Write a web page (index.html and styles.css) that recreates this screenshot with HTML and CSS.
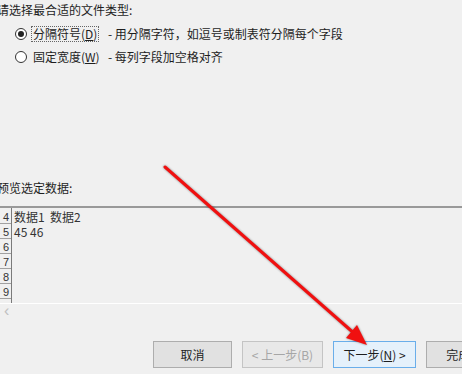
FILE: index.html
```html
<!DOCTYPE html>
<html>
<head>
    <meta charset="utf-8" />
    <title>文本导入向导</title>
    <link rel="stylesheet" href="styles.css">
</head>
<body>
    <div class="wizard">
        <p class="caption title">请选择最合适的文件类型:</p>
        <div class="options">
            <label class="opt">
                <span class="radio checked"></span>
                <span class="opt-name focus">分隔符号(<u>D</u>)</span>
                <span class="opt-desc">- 用分隔字符，如逗号或制表符分隔每个字段</span>
            </label>
            <label class="opt">
                <span class="radio"></span>
                <span class="opt-name">固定宽度(<u>W</u>)</span>
                <span class="opt-desc">- 每列字段加空格对齐</span>
            </label>
        </div>

        <p class="caption preview-title">预览选定数据:</p>
        <div class="preview">
            <div class="grid">
                <div class="nums">
                    <div class="num">4</div>
                    <div class="num">5</div>
                    <div class="num">6</div>
                    <div class="num">7</div>
                    <div class="num">8</div>
                    <div class="num">9</div>
                </div>
                <div class="data">
                    <div class="line">数据1  数据2</div>
                    <div class="line">45 46</div>
                </div>
            </div>
            <div class="hscroll">&lsaquo;</div>
        </div>

        <div class="buttons">
            <button class="btn cancel">取消</button>
            <button class="btn back" disabled>&lt; 上一步(B)</button>
            <button class="btn next">下一步(<u>N</u>) &gt;</button>
            <button class="btn finish">完成(F)</button>
        </div>
    </div>

    <!-- 红色箭头标注 -->
    <svg class="arrow" width="462" height="374" viewBox="0 0 462 374">
        <line x1="165" y1="167" x2="356" y2="335" stroke="#f01010" stroke-width="3" stroke-linecap="round" />
        <polygon points="367,345 346,338 357,325" fill="#f01010" />
    </svg>
</body>
</html>
```

FILE: styles.css
```css
*{
    box-sizing:border-box;
}
body{
    margin:0;
    width:462px;
    height:374px;
    overflow:hidden;
    position:relative;
    background:#f0f0f0;
    color:#1e1e1e;
    font-family:"Noto Sans CJK SC", "Liberation Sans", sans-serif;
    font-size:12px;
}
.wizard{
    margin-left:-3px;
}
.caption{
    margin:0;
    height:22px;
    line-height:20px;
    white-space:nowrap;
}
.options{
    padding-left:18px;
}
.opt{
    display:flex;
    align-items:center;
    height:23px;
    white-space:nowrap;
}
.radio{
    flex:none;
    width:12px;
    height:12px;
    border:1px solid #333;
    border-radius:50%;
    background:#fff;
    display:flex;
    align-items:center;
    justify-content:center;
}
.radio.checked::after{
    content:"";
    width:6px;
    height:6px;
    border-radius:50%;
    background:#222;
}
.opt-name{
    flex:none;
    width:68px;
    margin-left:4px;
    padding:0 1px;
    line-height:14px;
    border:1px dotted transparent;
}
.opt-name.focus{
    border-color:#666;
}
.opt-desc{
    margin-left:9px;
}
.preview-title{
    margin-top:110px;
    height:20px;
}
.preview{
    margin-top:8px;
    margin-left:3px;
    border-top:2px solid #999;
}
.grid{
    display:flex;
    height:95px;
}
.nums{
    width:12px;
    border-right:1px solid #7a7a7a;
    padding-top:1px;
}
.num{
    height:15px;
    border-bottom:1px solid #a0a0a0;
    font-family:"Liberation Sans", sans-serif;
    font-size:11px;
    line-height:16px;
    text-align:right;
    padding-right:2px;
    color:#333;
}
.data{
    padding-left:2px;
    padding-top:1px;
}
.line{
    height:15px;
    line-height:15px;
    color:#333;
    white-space:pre;
}
.hscroll{
    height:18px;
    border-top:1px solid #fff;
    padding-left:4px;
    color:#c0c0c0;
    font-family:"Liberation Sans", sans-serif;
    font-size:16px;
    line-height:14px;
}
.buttons{
    display:flex;
    gap:10px;
    margin-top:20px;
    padding-left:156px;
}
.btn{
    height:27px;
    flex:none;
    border:1px solid #adadad;
    background:#e1e1e1;
    color:#1e1e1e;
    font-family:"Noto Sans CJK SC", "Liberation Sans", sans-serif;
    font-size:12px;
    padding:0;
    white-space:nowrap;
}
.cancel{
    width:79px;
}
.back{
    width:81px;
    background:#e8e8e8;
    border-color:#c4c4c4;
    color:#a6a6a6;
}
.next{
    width:83px;
    background:#e5f1fb;
    border-color:#6aaeea;
}
.finish{
    width:79px;
}
.arrow{
    position:absolute;
    left:0;
    top:0;
    pointer-events:none;
    filter:drop-shadow(0 0 1px rgba(0,0,0,0.45));
}
```
